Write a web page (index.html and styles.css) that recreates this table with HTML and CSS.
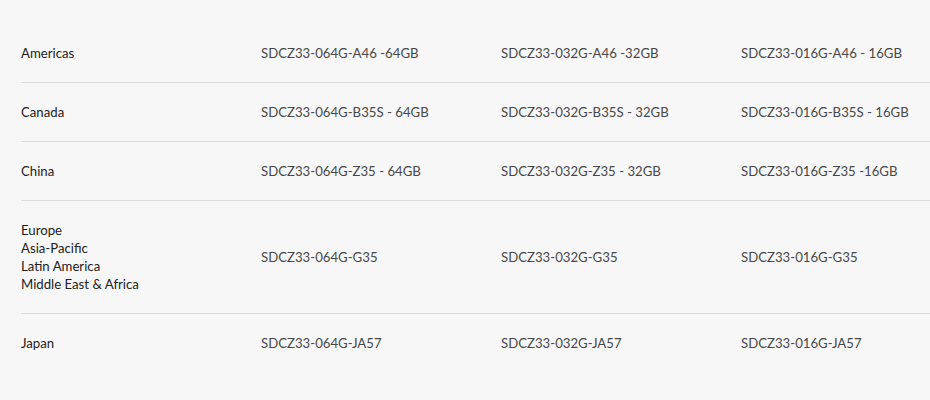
FILE: index.html
```html
<!DOCTYPE html>
<html>
<head>
<meta charset="utf-8">
<link rel="stylesheet" href="styles.css">
</head>
<body>
<table class="sku-table">
  <tbody>
    <tr>
      <td class="region">Americas</td>
      <td>SDCZ33-064G-A46 -64GB</td>
      <td>SDCZ33-032G-A46 -32GB</td>
      <td>SDCZ33-016G-A46 - 16GB</td>
    </tr>
    <tr>
      <td class="region">Canada</td>
      <td>SDCZ33-064G-B35S - 64GB</td>
      <td>SDCZ33-032G-B35S - 32GB</td>
      <td>SDCZ33-016G-B35S - 16GB</td>
    </tr>
    <tr>
      <td class="region">China</td>
      <td>SDCZ33-064G-Z35 - 64GB</td>
      <td>SDCZ33-032G-Z35 - 32GB</td>
      <td>SDCZ33-016G-Z35 -16GB</td>
    </tr>
    <tr>
      <td class="region">Europe<br>Asia-Pacific<br>Latin America<br>Middle East &amp; Africa</td>
      <td>SDCZ33-064G-G35</td>
      <td>SDCZ33-032G-G35</td>
      <td>SDCZ33-016G-G35</td>
    </tr>
    <tr>
      <td class="region">Japan</td>
      <td>SDCZ33-064G-JA57</td>
      <td>SDCZ33-032G-JA57</td>
      <td>SDCZ33-016G-JA57</td>
    </tr>
  </tbody>
</table>
</body>
</html>
```

FILE: styles.css
```css
html, body {
  margin: 0;
  padding: 0;
  background: #f7f7f7;
  overflow: hidden;
}
body {
  padding: 24px 0 0 21px;
  font-family: Lato, "Open Sans", sans-serif;
  font-size: 13.2px;
  line-height: 18px;
  color: #474747;
}
.sku-table {
  border-collapse: collapse;
  width: 909px;
  table-layout: fixed;
}
.sku-table td {
  width: 240px;
  padding: 20px 0;
  vertical-align: middle;
  text-align: left;
  border-bottom: 1px solid #dcdcdc;
  white-space: nowrap;
}
.sku-table td:last-child {
  width: auto;
}
.sku-table tr:last-child td {
  border-bottom: none;
}
.sku-table td.region {
  color: #222;
}
```
